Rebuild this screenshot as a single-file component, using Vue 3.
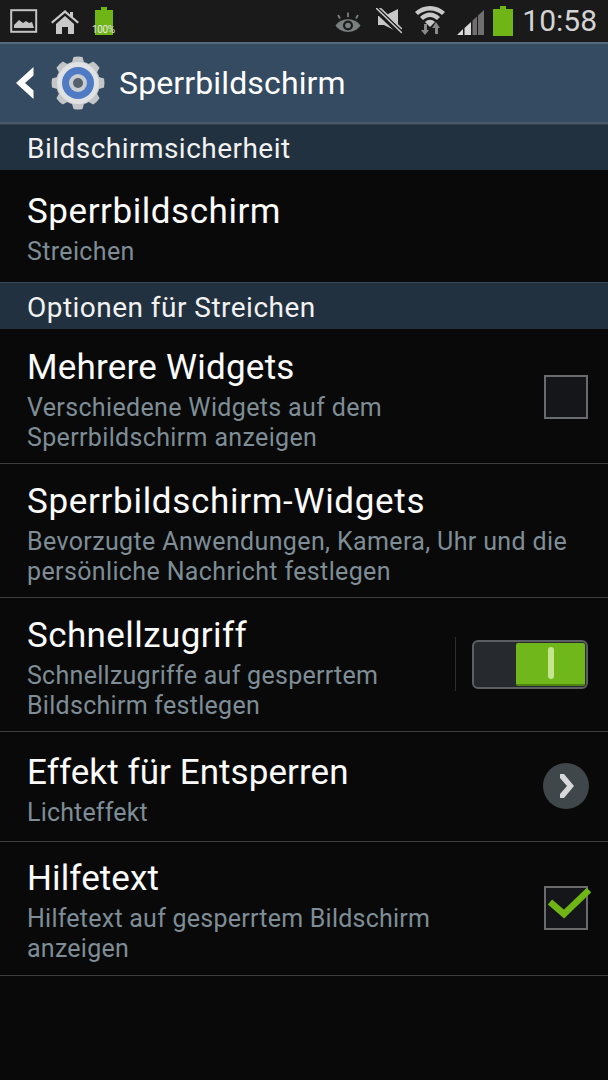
<script setup>
const firstRows = [{ title: 'Sperrbildschirm', sub: ['Streichen'] }]
const rows = [
  { title: 'Mehrere Widgets', sub: ['Verschiedene Widgets auf dem', 'Sperrbildschirm anzeigen'], type: 'check', h: 135, pt: 17, ts: 0.22, ss: 0.35 },
  { title: 'Sperrbildschirm-Widgets', sub: ['Bevorzugte Anwendungen, Kamera, Uhr und die', 'persönliche Nachricht festlegen'], h: 134, pt: 16, ts: 0.68, ss: 0.37 },
  { title: 'Schnellzugriff', sub: ['Schnellzugriffe auf gesperrtem', 'Bildschirm festlegen'], type: 'toggle', h: 134, pt: 16, ts: 0.41, ss: 0.28 },
  { title: 'Effekt für Entsperren', sub: ['Lichteffekt'], type: 'arrow', h: 110, pt: 19, ts: 0.07, ss: 0.17 },
  { title: 'Hilfetext', sub: ['Hilfetext auf gesperrtem Bildschirm', 'anzeigen'], type: 'checked', h: 134, pt: 15, ts: 0.1, ss: 0.24 }
]
function rowStyle(r) {
  return `height: ${r.h}px; padding-top: ${r.pt}px;`
}
function titleStyle(r) {
  return `letter-spacing: ${r.ts}px;`
}
function subStyle(r) {
  return `letter-spacing: ${r.ss}px;`
}
const gearTeeth = [0, 45, 90, 135, 180, 225, 270, 315]
</script>

<template>
  <div class="screen">
    <div class="status">
      <div class="status-left">
        <svg width="28" height="24" viewBox="0 0 28 24">
          <rect x="1.2" y="1.2" width="25" height="21.6" fill="#1b1b1b" stroke="#c4c4c4" stroke-width="2" />
          <path d="M4 19 V16 L9 11 L13 14 L16 12 L19 14 L22 13 L24 19 Z" fill="#c4c4c4" />
        </svg>
        <svg class="home" width="30" height="26" viewBox="0 0 30 26">
          <path d="M1 13 L15 1 L20 5.5 V3 H23 V8 L29 13 L27.5 14.5 L15 4 L2.5 14.5 Z" fill="#c8c8c8" />
          <path d="M6 15 L15 7 L24 15 V25 H18 V18 H12 V25 H6 Z" fill="#c8c8c8" />
        </svg>
        <div class="mini-batt">
          <svg width="20" height="28" viewBox="0 0 20 28">
            <path d="M7 0 H13 V3 H19 V28 H1 V3 H7 Z" fill="#6fb515" />
          </svg>
          <span class="mini-text">100%</span>
        </div>
      </div>
      <div class="status-right">
        <svg class="eye" width="26" height="20" viewBox="0 0 26 20">
          <path d="M0.5 13.5 C6 5 20 5 25.5 13.5 C20 22 6 22 0.5 13.5 Z" fill="#79807f" />
          <circle cx="13" cy="13.5" r="5" fill="#1b1b1b" />
          <circle cx="13" cy="13.5" r="2.8" fill="#79807f" />
          <path d="M5 6.5 L3 3 M13 5 V0.5 M21 6.5 L23 3" stroke="#79807f" stroke-width="1.8" />
        </svg>
        <svg class="mute" width="26" height="26" viewBox="0 0 26 26">
          <path d="M2 8 H8 L22 1 V24 L8 17 H2 Z" fill="#c8c8c8" />
          <path d="M0 1 L25 25" stroke="#1b1b1b" stroke-width="6" />
          <path d="M0 0 L26 25 M3 -1 L26 21" stroke="#c8c8c8" stroke-width="1.6" />
        </svg>
        <svg class="wifi" width="30" height="30" viewBox="0 0 30 30">
          <path d="M0 7 C8 -1 22 -1 30 7 L27 10 C20 4 10 4 3 10 Z" fill="#c8c8c8" />
          <path d="M5 12 C11 6 19 6 25 12 L22 15 C17 11 13 11 8 15 Z" fill="#c8c8c8" />
          <path d="M10 17 C13 14 17 14 20 17 L15 22 Z" fill="#c8c8c8" />
          <path d="M9 19 V25 H6 L10 30 L14 25 H12 V19 Z" fill="#8a8a8a" />
          <path d="M20 29 V23 H17 L21 17 L25 23 H23 V29 Z" fill="#8a8a8a" />
        </svg>
        <svg class="signal" width="28" height="27" viewBox="0 0 28 27">
          <path d="M0 26 L6 20 V26 Z M7.5 19 L14 13 V26 H7.5 Z" fill="#d8d8d8" />
          <path d="M15.5 11.5 L20 7.5 V26 H15.5 Z M21 6.5 L27 1 V26 H21 Z" fill="#6f6f6f" />
        </svg>
        <svg class="batt" width="20" height="30" viewBox="0 0 20 30">
          <path d="M7 0 H13 V3 H20 V30 H0 V3 H7 Z" fill="#6fb515" />
        </svg>
        <span class="clock">10:58</span>
      </div>
    </div>

    <div class="actionbar">
      <svg class="back" width="20" height="34" viewBox="0 0 20 34">
        <path d="M18.5 1 L1 17 L18.5 33 V24.5 L10 17 L18.5 9.5 Z" fill="#fff" />
      </svg>
      <svg class="gear" width="54" height="54" viewBox="0 0 54 54">
        <g fill="#c3c6c9">
          <circle cx="27" cy="27" r="22" />
          <path v-for="a in gearTeeth" :key="a" d="M20.5 8 L22.5 1 Q27 0 31.5 1 L33.5 8 Z" :transform="`rotate(${a} 27 27)`" />
        </g>
        <circle cx="27" cy="27" r="21" fill="#dfe1e3" />
        <circle cx="27" cy="27" r="16" fill="#4f7ac4" />
        <circle cx="27" cy="27" r="9" fill="#c9ccd0" />
        <circle cx="27" cy="27" r="5" fill="#56616c" />
      </svg>
      <span class="action-title">Sperrbildschirm</span>
    </div>

    <div class="section">Bildschirmsicherheit</div>
    <div v-for="r in firstRows" :key="r.title" class="row first">
      <div class="row-text">
        <div class="title">{{ r.title }}</div>
        <div class="sub">{{ r.sub[0] }}</div>
      </div>
    </div>

    <div class="section second">Optionen für Streichen</div>
    <div v-for="r in rows" :key="r.title" class="row divided" :style="rowStyle(r)">
      <div class="row-text">
        <div class="title" :style="titleStyle(r)">{{ r.title }}</div>
        <div class="sub" :style="subStyle(r)">
          <div v-for="line in r.sub" :key="line">{{ line }}</div>
        </div>
      </div>

      <div v-if="r.type === 'check'" class="checkbox"></div>

      <div v-if="r.type === 'checked'" class="checkbox checked">
        <svg class="tick" width="44" height="34" viewBox="0 0 44 34">
          <path d="M3 15 L17 27 L42 3" fill="none" stroke="#6fb515" stroke-width="6.5" />
        </svg>
      </div>

      <div v-if="r.type === 'toggle'" class="toggle-wrap">
        <div class="toggle-sep"></div>
        <div class="toggle">
          <div class="toggle-off"></div>
          <div class="toggle-on"><span class="grip"></span></div>
        </div>
      </div>

      <div v-if="r.type === 'arrow'" class="arrow">
        <svg width="16" height="26" viewBox="0 0 16 26">
          <path d="M1 1 L5 1 L15 13 L5 25 L1 25 L1 21 L8 13 L1 5 Z" fill="#d6d8d9" />
        </svg>
      </div>
    </div>
  </div>
</template>

<style>
html, body {
  margin: 0;
  background: #090909;
}
</style>

<style scoped>
.screen {
  width: 608px;
  height: 1080px;
  overflow: hidden;
  background: #090909;
  font-family: Roboto, "Liberation Sans", sans-serif;
  color: #fff;
}

.status {
  height: 42px;
  display: flex;
  justify-content: space-between;
  background: #1a1a1a;
  box-sizing: border-box;
}

.status-left {
  display: flex;
  align-items: flex-start;
  padding: 9px 0 0 10px;
  gap: 12px;
}

.mini-batt {
  position: relative;
  width: 20px;
  margin-left: 2px;
  margin-top: -2px;
}

.mini-text {
  position: absolute;
  left: -2px;
  top: 17px;
  font-size: 10px;
  color: #e8e8e8;
  letter-spacing: -0.4px;
}

.status-right {
  display: flex;
  align-items: flex-start;
  padding: 6px 11px 0 0;
}

.eye {
  margin-top: 6px;
}

.mute {
  margin: 2px 0 0 15px;
}

.wifi {
  margin: -1px 0 0 13px;
}

.signal {
  margin: 3px 0 0 12px;
}

.batt {
  margin: 0 0 0 8px;
}

.clock {
  margin-left: 9px;
  font-size: 30px;
  line-height: 30px;
  color: #d4d4d4;
}

.actionbar {
  height: 82px;
  box-sizing: border-box;
  display: flex;
  align-items: center;
  background: #344b61;
  border-top: 2px solid #566a7d;
  border-bottom: 2px solid #4b5a68;
  padding-left: 15px;
}

.back {
  flex: none;
}

.gear {
  margin-left: 16px;
  flex: none;
}

.action-title {
  margin-left: 14px;
  font-size: 32px;
  letter-spacing: 0.13px;
}

.section {
  height: 46px;
  box-sizing: border-box;
  padding: 2px 0 0 27px;
  display: flex;
  align-items: center;
  background: #22313f;
  border-top: 1px solid #2f4150;
  font-size: 28px;
  letter-spacing: 0.47px;
  color: #f2f2f2;
}

.section.second {
  height: 47px;
  border-top: 1px solid #3a4a58;
}

.row {
  display: flex;
  box-sizing: border-box;
  padding-left: 27px;
  position: relative;
}

.row.first {
  height: 112px;
  padding-top: 20px;
}

.row.divided {
  border-bottom: 1px solid #3a3d40;
}

.row-text {
  flex: 1;
}

.title {
  font-size: 35px;
  letter-spacing: 0.55px;
  line-height: 44px;
  color: #fbfbfb;
}

.sub {
  margin-top: 3px;
  font-size: 25px;
  letter-spacing: 0.35px;
  line-height: 30px;
  color: #7e8d96;
}

.checkbox {
  position: absolute;
  right: 20px;
  top: 46px;
  width: 44px;
  height: 44px;
  box-sizing: border-box;
  border: 2px solid #6a6b6d;
  background: #14161a;
}

.checkbox.checked {
  top: 44px;
}

.tick {
  position: absolute;
  left: 1px;
  top: -1px;
  overflow: visible;
}

.toggle-wrap {
  position: absolute;
  right: 20px;
  top: 39px;
  display: flex;
  align-items: center;
  gap: 16px;
}

.toggle-sep {
  width: 1px;
  height: 54px;
  background: #2c2f31;
}

.toggle {
  display: flex;
  width: 116px;
  height: 49px;
  box-sizing: border-box;
  border: 2px solid #5c5f61;
  border-radius: 6px;
  padding: 1px;
  background: #26292d;
}

.toggle-off {
  flex: 1;
}

.toggle-on {
  width: 69px;
  box-sizing: border-box;
  border-radius: 2px;
  background: #6fb71a;
  border-bottom: 2px solid #4f8412;
  display: flex;
  align-items: center;
  justify-content: center;
}

.grip {
  width: 6px;
  height: 32px;
  border-radius: 3px;
  background: #c4e58e;
}

.arrow {
  position: absolute;
  right: 19px;
  top: 31px;
  width: 46px;
  height: 46px;
  border-radius: 50%;
  background: #40474b;
  display: flex;
  align-items: center;
  justify-content: center;
  padding-left: 2px;
  box-sizing: border-box;
}
</style>
